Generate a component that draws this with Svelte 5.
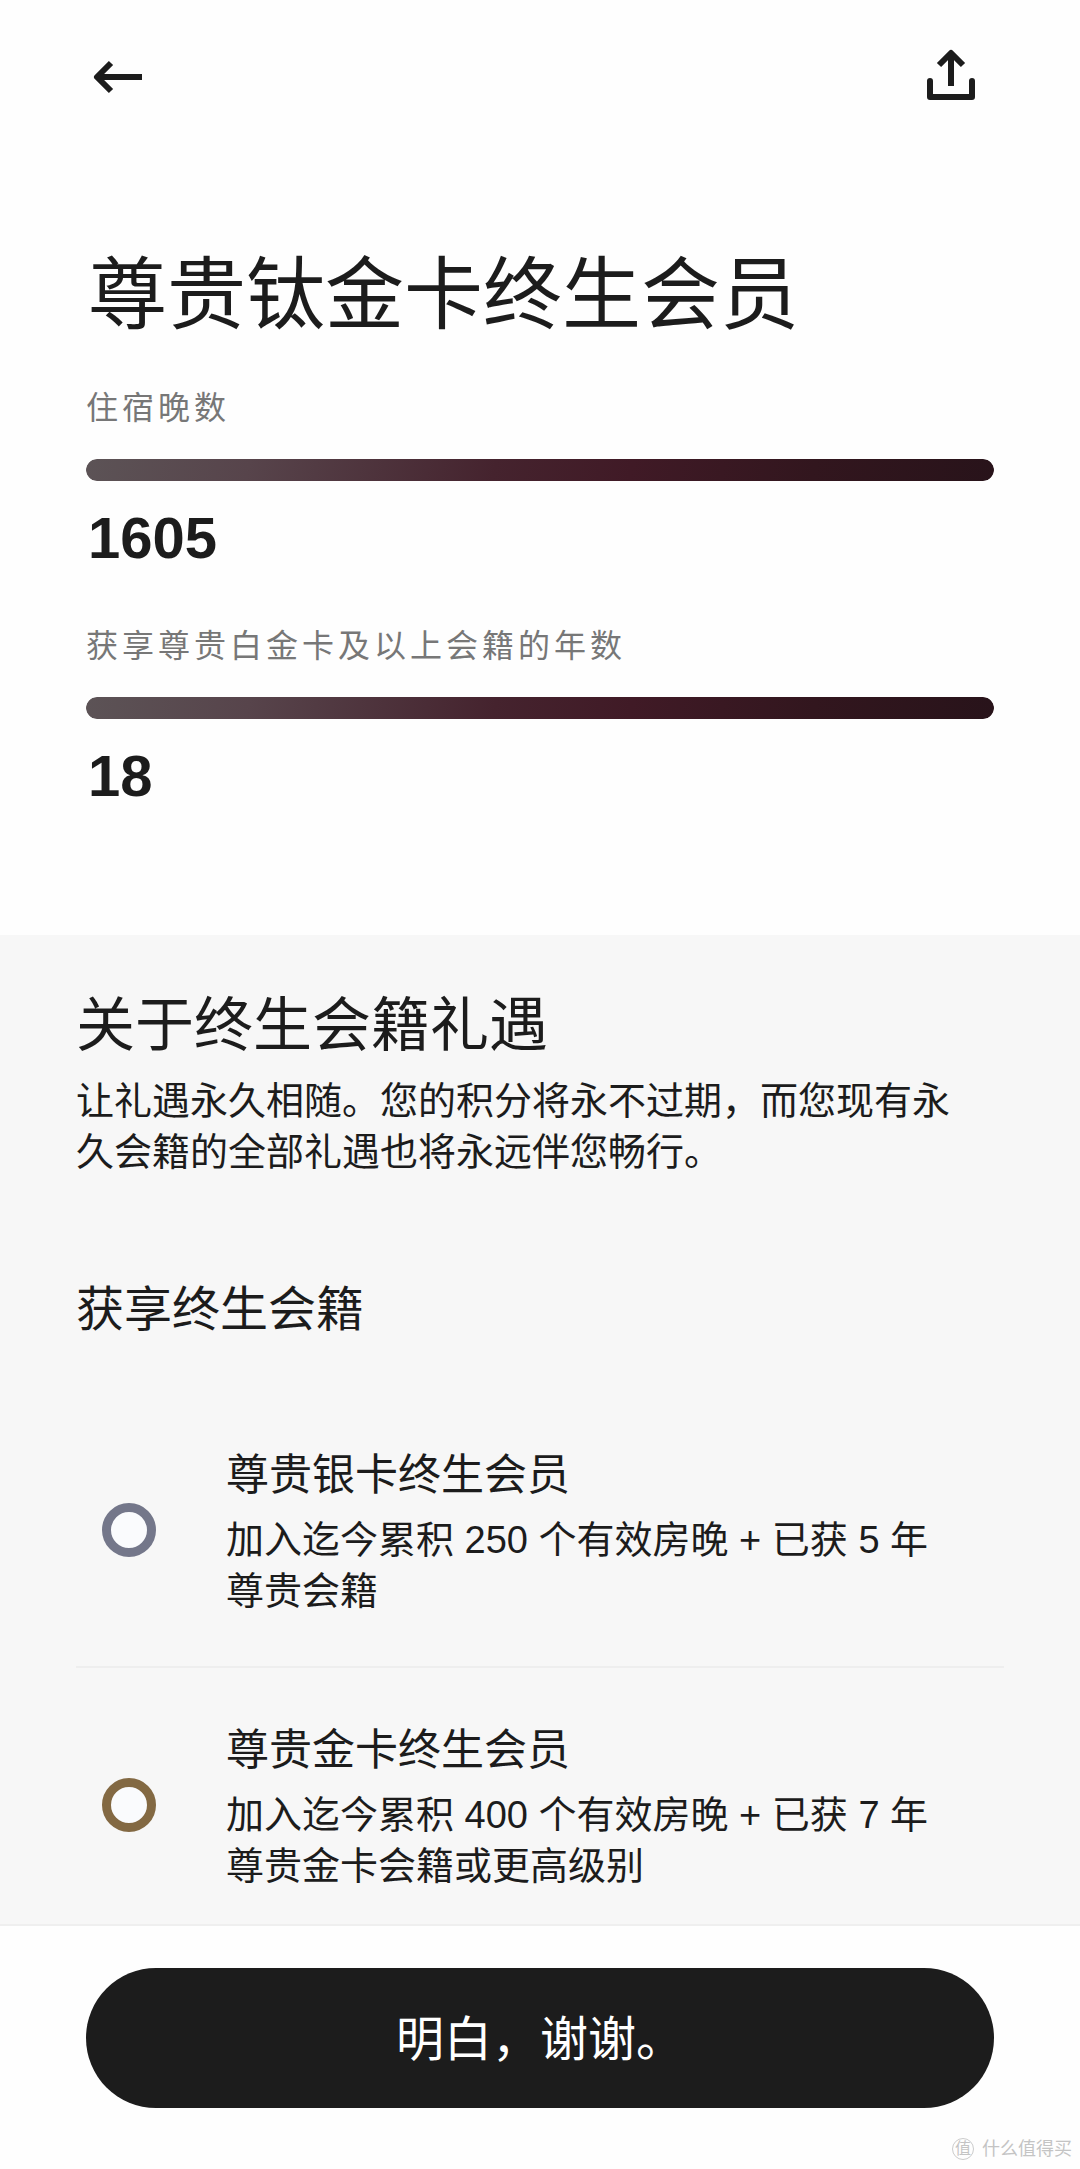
<script lang="ts">
  /**
   * Lifetime membership screen
   *
   * Progress towards lifetime status, followed by the tiers and their terms
   */

  interface Stat {
    id: string;
    label: string;
    value: number;
    percent: number;
  }

  interface Tier {
    id: 'silver' | 'gold';
    name: string;
    terms: string;
  }

  const stats: Stat[] = [
    { id: 'nights', label: '住宿晚数', value: 1605, percent: 100 },
    { id: 'years', label: '获享尊贵白金卡及以上会籍的年数', value: 18, percent: 100 },
  ];

  const tiers: Tier[] = [
    {
      id: 'silver',
      name: '尊贵银卡终生会员',
      terms: '加入迄今累积 250 个有效房晚 + 已获 5 年尊贵会籍',
    },
    {
      id: 'gold',
      name: '尊贵金卡终生会员',
      terms: '加入迄今累积 400 个有效房晚 + 已获 7 年尊贵金卡会籍或更高级别',
    },
  ];
</script>

<div class="page" lang="zh-CN">
  <header class="topbar">
    <button class="icon-button" type="button" aria-label="返回">
      <svg viewBox="0 0 64 64" width="64" height="64" aria-hidden="true">
        <path d="M56 32H11M25 18L11 32L25 46" />
      </svg>
    </button>
    <button class="icon-button" type="button" aria-label="分享">
      <svg viewBox="0 0 64 64" width="64" height="64" aria-hidden="true">
        <path d="M32 41V9M20 20L32 8L44 20" />
        <path d="M11 36V52H53V36" stroke-linecap="round" />
      </svg>
    </button>
  </header>

  <main>
    <section class="status">
      <h1>尊贵钛金卡终生会员</h1>
      <div class="stats">
        {#each stats as stat (stat.id)}
          <div class="stat">
            <span class="stat__label" id="{stat.id}-label">{stat.label}</span>
            <div
              class="stat__track"
              role="progressbar"
              aria-labelledby="{stat.id}-label"
              aria-valuenow={stat.percent}
              aria-valuemin="0"
              aria-valuemax="100"
            >
              <div class="stat__fill" style="width: {stat.percent}%"></div>
            </div>
            <strong class="stat__value">{stat.value}</strong>
          </div>
        {/each}
      </div>
    </section>

    <section class="about">
      <h2>关于终生会籍礼遇</h2>
      <p class="about__text">
        让礼遇永久相随。您的积分将永不过期，而您现有永久会籍的全部礼遇也将永远伴您畅行。
      </p>

      <h3>获享终生会籍</h3>
      <ul class="tiers">
        {#each tiers as tier (tier.id)}
          <li class="tier">
            <span class="tier__ring tier__ring--{tier.id}"></span>
            <div class="tier__body">
              <h4>{tier.name}</h4>
              <p>{tier.terms}</p>
            </div>
          </li>
        {/each}
      </ul>
    </section>
  </main>

  <footer class="actions">
    <button class="confirm" type="button">明白，谢谢。</button>
    <div class="watermark">
      <span class="watermark__badge">值</span>
      <span>什么值得买</span>
    </div>
  </footer>
</div>

<style>
  :global(body) {
    background: #fefefe;
  }

  .page {
    color: #1c1c1c;
    font-family: 'Liberation Sans', 'Noto Sans CJK SC', sans-serif;
  }

  h1,
  h2,
  h3,
  h4,
  p,
  ul {
    margin: 0;
    padding: 0;
    font-weight: 400;
  }

  /* Top bar */
  .topbar {
    display: flex;
    justify-content: space-between;
    padding: 45px 97px 45px 86px;
  }

  .icon-button {
    display: block;
    padding: 0;
    border: none;
    background: transparent;
    color: inherit;
    cursor: pointer;
  }

  .icon-button svg {
    display: block;
    fill: none;
    stroke: currentColor;
    stroke-width: 6;
    stroke-linejoin: round;
  }

  /* Status */
  .status {
    padding: 94px 86px 123px;
  }

  h1,
  .stat__value {
    padding-left: 2px;
  }

  h1 {
    font-size: 79px;
    line-height: 96px;
  }

  .stats {
    display: flex;
    flex-direction: column;
    gap: 48px;
    margin-top: 40px;
  }

  .stat {
    display: flex;
    flex-direction: column;
  }

  .stat__label {
    color: #777;
    font-size: 32px;
    line-height: 48px;
    letter-spacing: 4px;
  }

  .stat__track {
    height: 22px;
    margin: 27px 0 21px;
    border-radius: 11px;
    overflow: hidden;
  }

  .stat__fill {
    height: 100%;
    border-radius: 11px;
    background: linear-gradient(
      100deg,
      #5c5356 0%,
      #57444b 18%,
      #45232e 45%,
      #401a26 60%,
      #32161e 80%,
      #28131a 100%
    );
  }

  .stat__value {
    font-size: 58px;
    line-height: 72px;
  }

  /* About */
  .about {
    padding: 59px 76px 32px;
    background: #f7f7f7;
  }

  h2 {
    font-size: 59px;
    line-height: 64px;
  }

  .about__text {
    margin-top: 18px;
    padding-right: 44px;
    font-size: 38px;
    line-height: 51px;
  }

  h3 {
    margin-top: 102px;
    font-size: 48px;
    line-height: 60px;
  }

  .tiers {
    margin-top: 53px;
    list-style: none;
  }

  .tier {
    display: flex;
    align-items: flex-start;
    gap: 70px;
    padding: 55px 44px 0 26px;
  }

  .tier + .tier {
    margin-top: 49px;
    border-top: 2px solid #eee;
  }

  .tier__ring {
    flex-shrink: 0;
    box-sizing: border-box;
    width: 54px;
    height: 54px;
    margin-top: 55px;
    border: 9px solid;
    border-radius: 50%;
    background: #fafbfd;
  }

  .tier__ring--silver {
    border-color: #74778a;
  }

  .tier__ring--gold {
    border-color: #836943;
  }

  h4 {
    font-size: 43px;
    line-height: 54px;
  }

  .tier__body p {
    margin-top: 13px;
    font-size: 38px;
    line-height: 51px;
  }

  /* Bottom actions */
  .actions {
    position: sticky;
    bottom: 0;
    padding: 42px 86px 61px;
    border-top: 2px solid #efefef;
    background: #fefefe;
  }

  .confirm {
    display: block;
    width: 100%;
    height: 140px;
    padding: 0 0 6px;
    border: none;
    border-radius: 70px;
    background: #1c1c1c;
    color: #fff;
    font-family: inherit;
    font-size: 48px;
    cursor: pointer;
  }

  .watermark {
    position: absolute;
    right: 8px;
    bottom: 8px;
    display: flex;
    align-items: center;
    gap: 8px;
    color: #c4c4c4;
    font-size: 18px;
    line-height: 24px;
  }

  .watermark__badge {
    box-sizing: border-box;
    width: 22px;
    height: 22px;
    border: 1px solid #ccc;
    border-radius: 50%;
    font-size: 16px;
    line-height: 20px;
    text-align: center;
  }
</style>
